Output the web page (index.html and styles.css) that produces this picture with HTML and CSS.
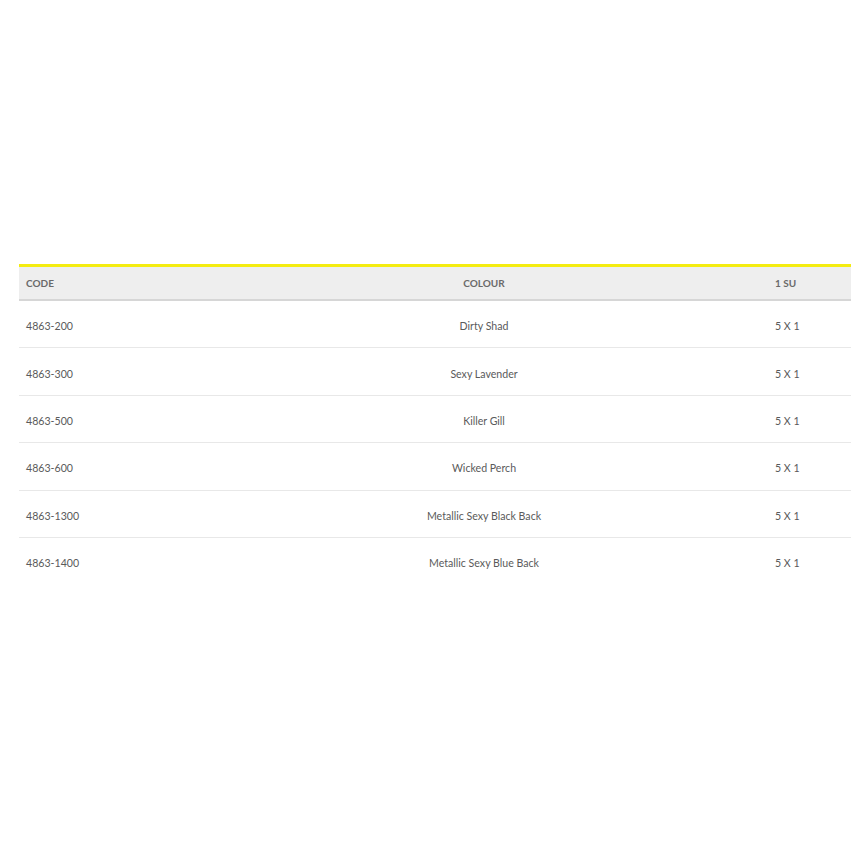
FILE: index.html
```html
<!DOCTYPE html>
<html>
<head>
<meta charset="utf-8">
<link rel="stylesheet" href="styles.css">
</head>
<body>
<div class="page">
<table class="spec">
  <colgroup><col class="c1"><col class="c2"><col class="c3"></colgroup>
  <thead>
    <tr><th class="left">CODE</th><th class="mid">COLOUR</th><th class="left">1 SU</th></tr>
  </thead>
  <tbody>
    <tr><td>4863-200</td><td class="mid">Dirty Shad</td><td>5 X 1</td></tr>
    <tr><td>4863-300</td><td class="mid">Sexy Lavender</td><td>5 X 1</td></tr>
    <tr><td>4863-500</td><td class="mid">Killer Gill</td><td>5 X 1</td></tr>
    <tr><td>4863-600</td><td class="mid">Wicked Perch</td><td>5 X 1</td></tr>
    <tr><td>4863-1300</td><td class="mid">Metallic Sexy Black Back</td><td>5 X 1</td></tr>
    <tr><td>4863-1400</td><td class="mid">Metallic Sexy Blue Back</td><td>5 X 1</td></tr>
  </tbody>
</table>
</div>
</body>
</html>
```
FILE: styles.css
```css
html, body { margin: 0; padding: 0; background: #fff; }
.page { padding: 264px 4px 0 19px; }
.spec {
  width: 832px;
  border-collapse: collapse;
  table-layout: fixed;
  font-family: Lato, "Open Sans", sans-serif;
  font-size: 10.6px;
  color: #5a5a5a;
  border-top: 3px solid #f4ec10;
}
.c1 { width: 181px; }
.c2 { width: 568px; }
.c3 { width: 83px; }
.spec th {
  background: #eeeeee;
  color: #6a6a6a;
  font-size: 10px;
  font-weight: 700;
  height: 32px;
  padding: 0 7px;
  border-bottom: 2px solid #d6d6d6;
  text-align: left;
}
.spec th.mid, .spec td.mid { text-align: center; }
.spec td {
  height: 42.4px;
  padding: 4px 7px 0;
  text-align: left;
  border-bottom: 1px solid #e8e8e8;
}
.spec tbody tr:last-child td { border-bottom: none; }
```
